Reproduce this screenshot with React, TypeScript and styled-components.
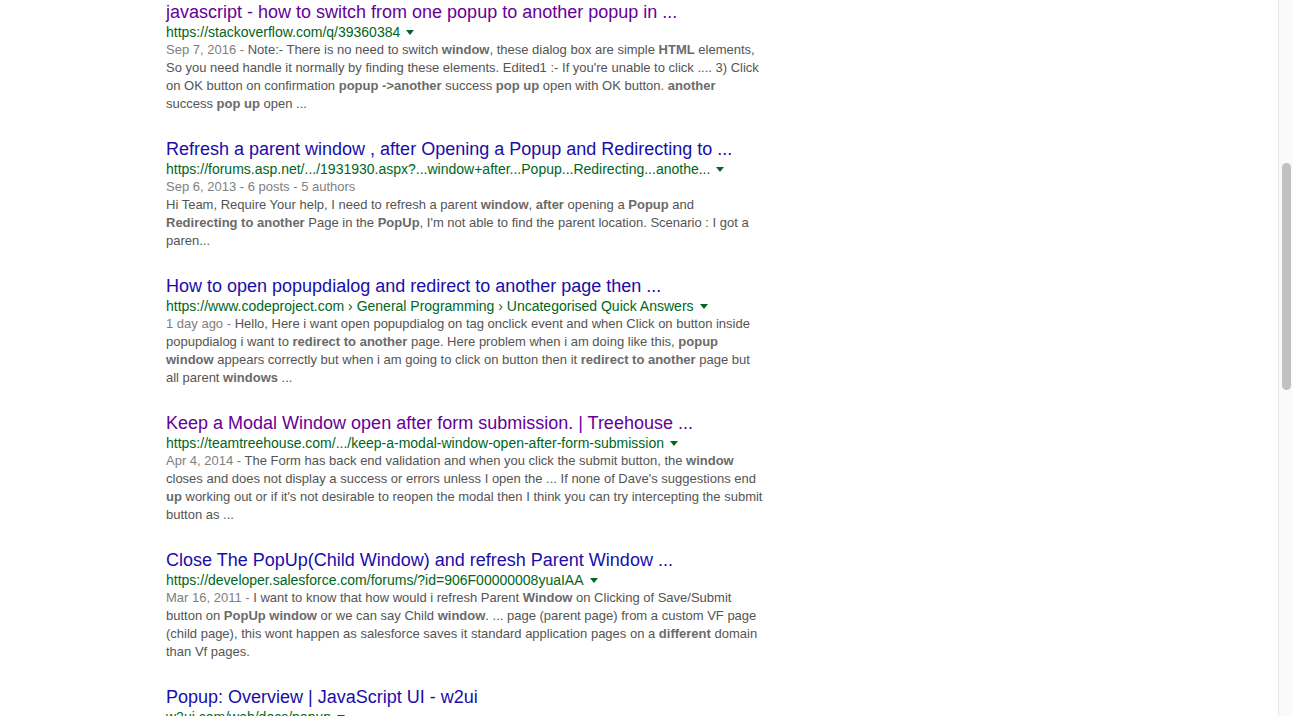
import React from 'react'
import styled, { createGlobalStyle } from 'styled-components'

const GlobalStyle = createGlobalStyle`
  html, body {
    margin: 0;
    padding: 0;
    background: #FFF;
    overflow: hidden;
  }
`;

const Page = styled.div`
  display: flex;
  height: 100vh;
  font-family: 'Liberation Sans', Arial, sans-serif;
`;

const Main = styled.main`
  flex: 1;
  padding-left: 166px;
  overflow: hidden;
`;

const ResultList = styled.div`
  display: flex;
  flex-direction: column;
  gap: 24px;
`;

const Result = styled.div`
  display: flex;
  flex-direction: column;
`;

const Title = styled.h3<{ $visited?: boolean }>`
  margin: 0;
  font-size: 18px;
  font-weight: 400;
  line-height: 24px;
  white-space: nowrap;

  & a {
    color: ${(p) => (p.$visited ? '#660099' : '#1A0DAB')};
    text-decoration: none;
  }
`;

const UrlRow = styled.div`
  display: flex;
  align-items: flex-start;
  height: 17px;
  white-space: nowrap;
`;

const Cite = styled.cite`
  font-style: normal;
  font-size: 14px;
  line-height: 16px;
  color: #006621;
`;

const Caret = styled.span`
  display: inline-block;
  margin-left: 6px;
  margin-top: 6px;
  border-top: 5px solid #006621;
  border-left: 4px solid transparent;
  border-right: 4px solid transparent;
`;

const Snippet = styled.div`
  font-size: 13px;
  line-height: 18px;
  color: #545454;

  & b {
    color: #6A6A6A;
    font-weight: 700;
  }
`;

const Line = styled.div`
  white-space: nowrap;
`;

const Meta = styled.span`
  color: #808080;
`;

const Scrollbar = styled.div`
  width: 14px;
  flex-shrink: 0;
  background: #FAFAFA;
  border-left: 1px solid #E8E8E8;
`;

const Thumb = styled.div`
  margin-top: 163px;
  margin-left: 3px;
  width: 9px;
  height: 227px;
  border-radius: 5px;
  background: #C1C1C1;
`;

type ResultData = {
  title: string;
  visited?: boolean;
  url: string;
  meta?: string;
  metaLine?: string;
  lines: string[];
};

const results: ResultData[] = [
  {
    title: 'javascript - how to switch from one popup to another popup in ...',
    visited: true,
    url: 'https://stackoverflow.com/q/39360384',
    meta: 'Sep 7, 2016 - ',
    lines: [
      'Note:- There is no need to switch **window**, these dialog box are simple **HTML** elements,',
      "So you need handle it normally by finding these elements. Edited1 :- If you're unable to click .... 3) Click",
      'on OK button on confirmation **popup** **->another** success **pop up** open with OK button. **another**',
      'success **pop up** open ...',
    ],
  },
  {
    title: 'Refresh a parent window , after Opening a Popup and Redirecting to ...',
    url: 'https://forums.asp.net/.../1931930.aspx?...window+after...Popup...Redirecting...anothe...',
    metaLine: 'Sep 6, 2013 - 6 posts - 5 authors',
    lines: [
      'Hi Team, Require Your help, I need to refresh a parent **window**, **after** opening a **Popup** and',
      "**Redirecting to another** Page in the **PopUp**, I'm not able to find the parent location. Scenario : I got a",
      'paren...',
    ],
  },
  {
    title: 'How to open popupdialog and redirect to another page then ...',
    url: 'https://www.codeproject.com \u203A General Programming \u203A Uncategorised Quick Answers',
    meta: '1 day ago - ',
    lines: [
      'Hello, Here i want open popupdialog on tag onclick event and when Click on button inside',
      'popupdialog i want to **redirect to another** page. Here problem when i am doing like this, **popup**',
      '**window** appears correctly but when i am going to click on button then it **redirect to another** page but',
      'all parent **windows** ...',
    ],
  },
  {
    title: 'Keep a Modal Window open after form submission. | Treehouse ...',
    visited: true,
    url: 'https://teamtreehouse.com/.../keep-a-modal-window-open-after-form-submission',
    meta: 'Apr 4, 2014 - ',
    lines: [
      'The Form has back end validation and when you click the submit button, the **window**',
      "closes and does not display a success or errors unless I open the ... If none of Dave's suggestions end",
      "**up** working out or if it's not desirable to reopen the modal then I think you can try intercepting the submit",
      'button as ...',
    ],
  },
  {
    title: 'Close The PopUp(Child Window) and refresh Parent Window ...',
    url: 'https://developer.salesforce.com/forums/?id=906F00000008yuaIAA',
    meta: 'Mar 16, 2011 - ',
    lines: [
      'I want to know that how would i refresh Parent **Window** on Clicking of Save/Submit',
      'button on **PopUp window** or we can say Child **window**. ... page (parent page) from a custom VF page',
      '(child page), this wont happen as salesforce saves it standard application pages on a **different** domain',
      'than Vf pages.',
    ],
  },
  {
    title: 'Popup: Overview | JavaScript UI - w2ui',
    url: 'w2ui.com/web/docs/popup',
    lines: [],
  },
];

// split "**word**" markers into bold runs
const renderLine = (text: string) =>
  text.split('**').map((part, i) => (i % 2 === 1 ? <b key={i}>{part}</b> : <React.Fragment key={i}>{part}</React.Fragment>));

const SearchResult = (props: ResultData) => {
  return (
    <Result>
      <Title $visited={props.visited}>
        <a href="#">{props.title}</a>
      </Title>
      <UrlRow>
        <Cite>{props.url}</Cite>
        <Caret />
      </UrlRow>
      {(props.lines.length > 0 || props.metaLine) && (
        <Snippet>
          {props.metaLine && (
            <Line>
              <Meta>{props.metaLine}</Meta>
            </Line>
          )}
          {props.lines.map((line, i) => (
            <Line key={i}>
              {i === 0 && props.meta && <Meta>{props.meta}</Meta>}
              {renderLine(line)}
            </Line>
          ))}
        </Snippet>
      )}
    </Result>
  )
}

const App = () => {
  return (
    <>
      <GlobalStyle />
      <Page>
        <Main>
          <ResultList>
            {results.map((r, i) => (
              <SearchResult key={i} {...r} />
            ))}
          </ResultList>
        </Main>
        <Scrollbar>
          <Thumb />
        </Scrollbar>
      </Page>
    </>
  )
}

export default App
